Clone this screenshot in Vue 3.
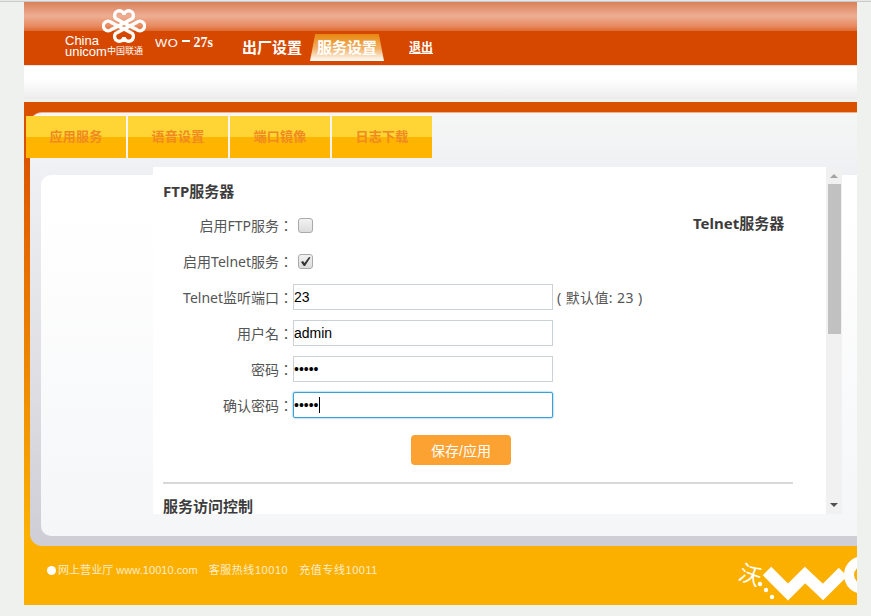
<template>
  <div class="page">
    <div class="header">
      <div class="logo">
        <svg class="knot" width="44" height="36" viewBox="0 0 44 36" fill="none" stroke="#fff" stroke-width="3.400">
          <path d="M22 15 L13.500 10.500 A4.800 4.800 0 1 1 22 6.500 A4.800 4.800 0 1 1 30.500 10.500 Z" />
          <path d="M22 21 L13.500 25.500 A4.800 4.800 0 1 0 22 29.500 A4.800 4.800 0 1 0 30.500 25.500 Z" />
          <path d="M22 15 L9.500 21.500 A4.800 4.800 0 1 1 9.500 14.500 L22 21 L34.500 14.500 A4.800 4.800 0 1 1 34.500 21.500 Z" />
        </svg>
        <div class="brand-en">China</div>
        <div class="brand-row">unicom<span class="brand-cn">中国联通</span></div>
      </div>
      <div class="model"><span class="model-wo">WO</span><span class="model-dash"></span><span class="model-num">27s</span></div>
      <a class="nav-item">出厂设置</a>
      <a class="nav-item active">服务设置</a>
      <a class="nav-exit">退出</a>
    </div>

    <div class="band"></div>

    <div class="main">
      <div class="panel">
        <div class="tabs">
          <div v-for="tab in tabs" :key="tab" class="tab">{{ tab }}</div>
        </div>
        <div class="inner">
          <div class="pane">
            <div class="content">
              <div class="section-title">FTP服务器</div>
              <div class="row">
                <label class="row-label">启用FTP服务：</label>
                <span class="check"></span>
                <span class="telnet-title">Telnet服务器</span>
              </div>
              <div class="row">
                <label class="row-label">启用Telnet服务：</label>
                <span class="check">
                  <svg width="11" height="11" viewBox="0 0 11 11"><path d="M1 6 L3 5 L4.500 7 L9 1 L10.500 1.500 L5 10 L3.800 10 Z" fill="#333" /></svg>
                </span>
              </div>
              <div class="row">
                <label class="row-label">Telnet监听端口：</label>
                <input class="text-input" type="text" value="23" readonly />
                <span class="hint">( 默认值: 23 )</span>
              </div>
              <div class="row">
                <label class="row-label">用户名：</label>
                <input class="text-input" type="text" value="admin" readonly />
              </div>
              <div class="row">
                <label class="row-label">密码：</label>
                <input class="text-input" type="password" value="admin" readonly />
              </div>
              <div class="row">
                <label class="row-label">确认密码：</label>
                <div class="input-wrap">
                  <input class="text-input focused" type="password" value="admin" readonly />
                  <span class="caret"></span>
                </div>
              </div>
              <div class="actions">
                <button class="save-btn">保存/应用</button>
              </div>
              <div class="divider"></div>
              <div class="section-title access">服务访问控制</div>
            </div>
            <div class="scrollbar">
              <span class="arrow up"></span>
              <span class="thumb"></span>
              <span class="arrow down"></span>
            </div>
          </div>
        </div>
      </div>
      <div class="footer">
        <div class="footer-text">
          <span class="site"><i class="dot"></i>网上营业厅 www.10010.com</span>
          <span>客服热线10010</span>
          <span>充值专线10011</span>
        </div>
        <div class="wo-logo">
          <span class="wo-char">沃</span>
          <svg width="104" height="60" viewBox="0 0 104 60" fill="none" stroke="#fff">
            <path d="M14 25 L35 46 L52 29 L70 46 L90 26" stroke-width="12" />
            <circle cx="110" cy="29" r="14" stroke-width="10" />
            <g fill="#fff" stroke="none">
              <circle cx="7" cy="38" r="2.200" />
              <circle cx="13" cy="44" r="2.200" />
              <circle cx="19" cy="51" r="2.200" />
            </g>
          </svg>
        </div>
      </div>
    </div>
  </div>
</template>

<script setup>
const tabs = ['应用服务', '语音设置', '端口镜像', '日志下载']
</script>

<style>
html,
body {
  margin: 0;
  background: #eff1ee;
}
</style>

<style scoped>
.page {
  width: 833px;
  height: 605px;
  margin-left: 24px;
  padding-top: 2px;
  box-sizing: border-box;
  overflow: hidden;
  font-family: "Liberation Sans", "Noto Sans CJK SC", sans-serif;
  position: relative;
}

.page::before {
  content: '';
  position: fixed;
  left: 0;
  top: 0;
  width: 871px;
  height: 2px;
  background: linear-gradient(#f4f4f4, #bdbdbd);
}

.header {
  height: 63px;
  display: flex;
  align-items: flex-end;
  background: linear-gradient(#d8805a 0, #eeae92 14px, #e88a60 24px, #df6a34 29px, #d64800 29px);
  border-bottom: 1px solid #f3e3d8;
  box-sizing: content-box;
  color: #fff;
}

.logo {
  width: 90px;
  margin-left: 41px;
  margin-bottom: 8px;
  display: flex;
  flex-direction: column;
}

.knot {
  margin: 0 0 -9px 37px;
}

.brand-en {
  font-size: 13px;
  line-height: 11px;
}

.brand-row {
  font-size: 13px;
  line-height: 11px;
  display: flex;
  align-items: center;
}

.brand-cn {
  font-size: 9px;
  white-space: nowrap;
}

.model {
  display: flex;
  align-items: center;
  margin-bottom: 14px;
  width: 87px;
}

.model-wo {
  font-size: 13px;
  letter-spacing: 0.5px;
  transform: scaleY(0.8);
}

.model-dash {
  width: 8px;
  height: 2px;
  margin: 0 3px 4px 4px;
  background: #fff;
}

.model-num {
  font-family: "Liberation Serif", serif;
  font-weight: bold;
  font-size: 14px;
}

.nav-item {
  font-size: 15px;
  font-weight: bold;
  line-height: 27px;
  margin-bottom: 4px;
  white-space: nowrap;
}

.nav-item.active {
  width: 74px;
  margin-left: 8px;
  margin-bottom: 4px;
  text-align: center;
  clip-path: polygon(7% 0, 93% 0, 100% 100%, 0 100%);
  background: linear-gradient(#e8860c, #f2b36c 55%, #fff);
}

.nav-exit {
  font-size: 12px;
  font-weight: bold;
  line-height: 16px;
  margin: 0 0 9px 25px;
  text-decoration: underline;
}

.band {
  height: 33px;
  margin-bottom: 3px;
  background: linear-gradient(#fff 40%, #ececec);
}

.main {
  height: 503px;
  padding-top: 10px;
  box-sizing: border-box;
  background: linear-gradient(#d85000 0, #d85000 40px, #e06000 100px, #f09000 300px, #fbb000 430px);
  display: flex;
  flex-direction: column;
}

.panel {
  height: 434px;
  margin-left: 6px;
  padding-top: 4px;
  box-sizing: border-box;
  border-radius: 12px 0 0 12px;
  border-top: 1px solid #f4b088;
  background: linear-gradient(#f5f7f6, #eff0f3 60px, #dcdce2 290px, #cfcdd6);
}

.tabs {
  display: flex;
  gap: 2px;
  margin-left: -4px;
  margin-top: -1px;
}

.tab {
  width: 100px;
  height: 42px;
  text-align: center;
  line-height: 41px;
  font-size: 13px;
  letter-spacing: 0.25px;
  font-weight: bold;
  color: #f08a20;
  background: linear-gradient(#fed535 50%, #ffb400 50%);
}

.inner {
  height: 361px;
  margin: 17px 0 0 11px;
  border-radius: 10px 0 0 10px;
  background: linear-gradient(#fff 10%, #f5f6f8);
}

.pane {
  width: 689px;
  height: 347px;
  margin-left: 112px;
  position: relative;
  top: -8px;
  display: flex;
  background: #fff;
}

.content {
  width: 673px;
  height: 347px;
  overflow: hidden;
  font-family: "Noto Sans", "Noto Sans CJK TC", sans-serif;
  font-size: 14px;
  color: #555;
}

.section-title {
  font-family: "Noto Sans", "Noto Sans CJK SC", sans-serif;
  font-weight: bold;
  font-size: 15px;
  line-height: 20px;
  color: #3c3c3c;
  margin: 14px 0 0 10px;
}

.row {
  display: flex;
  align-items: center;
  height: 26px;
  margin-bottom: 10px;
}

.section-title + .row {
  margin-top: 11px;
}

.row-label {
  width: 140px;
  text-align: right;
  white-space: nowrap;
}

.check {
  width: 13px;
  height: 13px;
  margin-left: 5px;
  border: 1px solid #aaa;
  border-radius: 3px;
  background: linear-gradient(#f2f2f2, #dcdcdc);
  display: flex;
  align-items: center;
  justify-content: center;
}

.telnet-title {
  margin-left: 380px;
  margin-bottom: 6px;
  font-family: "Noto Sans", "Noto Sans CJK SC", sans-serif;
  font-size: 15px;
  font-weight: bold;
  color: #3c3c3c;
  white-space: nowrap;
}

.text-input {
  width: 260px;
  height: 26px;
  padding: 0 1px 0 0;
  box-sizing: border-box;
  border: 1px solid #ccd1d5;
  font-size: 14px;
  font-family: "Liberation Sans", sans-serif;
  color: #000;
  outline: none;
}

.text-input.focused {
  border: 1px solid #3b9fd8;
  border-radius: 2px;
  box-shadow: 0 0 2px #3b9fd8;
}

.input-wrap {
  position: relative;
  height: 26px;
}

.caret {
  position: absolute;
  left: 26px;
  top: 5px;
  width: 1px;
  height: 16px;
  background: #000;
}

.hint {
  margin-left: 4px;
  letter-spacing: 0.4px;
  white-space: nowrap;
}

.actions {
  display: flex;
  margin: 17px 0 0 258px;
}

.save-btn {
  width: 100px;
  height: 30px;
  border: none;
  border-radius: 4px;
  background: #fba232;
  color: #fff;
  font-size: 14px;
  font-family: "Liberation Sans", "Noto Sans CJK SC", sans-serif;
}

.divider {
  margin: 17px 0 0 10px;
  width: 630px;
  height: 2px;
  background: #d8d8d8;
}

.section-title.access {
  margin-top: 12px;
  margin-left: 10px;
}

.scrollbar {
  width: 16px;
  height: 347px;
  background: #f1f1f1;
  display: flex;
  flex-direction: column;
  align-items: center;
}

.arrow {
  width: 0;
  height: 0;
  border-left: 4px solid transparent;
  border-right: 4px solid transparent;
}

.arrow.up {
  margin-top: 7px;
  border-bottom: 4px solid #a3a3a3;
}

.arrow.down {
  margin-top: 169px;
  border-top: 4px solid #505050;
}

.thumb {
  width: 13px;
  height: 150px;
  margin-top: 6px;
  background: #c1c1c1;
}

.footer {
  flex: 1;
  display: flex;
  justify-content: space-between;
  background: #fbb000;
  overflow: hidden;
}

.footer-text {
  margin: 18px 0 0 23px;
  font-size: 11px;
  line-height: 13px;
  color: #ffeccb;
  display: flex;
  gap: 11px;
  letter-spacing: 0.55px;
}

.site {
  letter-spacing: 0.05px;
}

.dot {
  display: inline-block;
  width: 9px;
  height: 9px;
  margin-right: 2px;
  border-radius: 50%;
  background: #fff;
  vertical-align: -1px;
}

.wo-logo {
  width: 104px;
  position: relative;
}

.wo-char {
  position: absolute;
  left: -14px;
  top: 18px;
  font-size: 22px;
  line-height: 24px;
  color: #fff;
  transform: rotate(20deg);
}
</style>
